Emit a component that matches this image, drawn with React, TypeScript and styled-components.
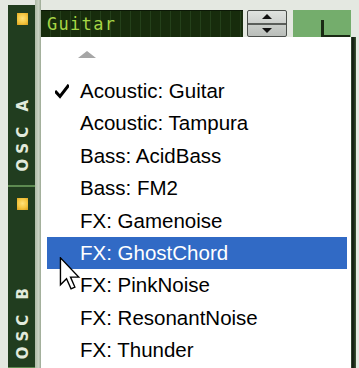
import React from "react";
import styled, { createGlobalStyle } from "styled-components";

const Global = createGlobalStyle`
  html, body { margin: 0; padding: 0; }
  body {
    background: #e4e8e1;
    overflow: hidden;
    font-family: "Liberation Sans", Arial, sans-serif;
  }
`;

const Page = styled.div`
  position: relative;
  display: flex;
  width: 359px;
  height: 368px;
  padding-left: 8px;
  box-sizing: border-box;
  overflow: hidden;
`;

const SidePanel = styled.div`
  width: 27px;
  margin-top: 5px;
  background: #213d1f;
  display: flex;
  flex-direction: column;
  flex-shrink: 0;
`;

const Section = styled.div<{ $ledTop: number }>`
  height: 182px;
  flex-shrink: 0;
  display: flex;
  flex-direction: column;
  align-items: center;
  padding-top: ${(p) => p.$ledTop}px;
  box-sizing: border-box;
  border-bottom: 2px solid #5d8a50;
`;

const Led = styled.div`
  width: 11px;
  height: 12px;
  margin-left: 2px;
  background: radial-gradient(circle at 50% 45%, #ffe27a 0%, #f4c640 55%, #d99c1c 100%);
`;

const VLabel = styled.div<{ $gap: number }>`
  margin-top: ${(p) => p.$gap}px;
  margin-left: 3px;
  writing-mode: vertical-rl;
  transform: rotate(180deg);
  font-family: "DejaVu Sans", Verdana, sans-serif;
  font-weight: bold;
  font-size: 15px;
  letter-spacing: 5px;
  line-height: 15px;
  color: #e2eadc;
`;

const Stripe = styled.div`
  width: 6px;
  flex-shrink: 0;
  background: linear-gradient(90deg, #aebba6 0%, #c9d2c2 60%, #9aa893 100%);
`;

const Main = styled.div`
  flex: 1;
  display: flex;
  flex-direction: column;
  min-width: 0;
`;

const TopBar = styled.div`
  display: flex;
  align-items: stretch;
  height: 27px;
  margin-top: 10px;
  flex-shrink: 0;
`;

const Display = styled.div`
  width: 202px;
  box-sizing: border-box;
  background-color: #172c0c;
  background-image: repeating-linear-gradient(
    90deg,
    transparent 0px,
    transparent 9px,
    #24401a 9px,
    #24401a 10px
  );
  border-top: 1px solid #0c1806;
  display: flex;
  align-items: center;
  padding-left: 6px;
  font-family: "DejaVu Sans Mono", "Liberation Mono", monospace;
  font-size: 17px;
  letter-spacing: 1.3px;
  color: #a6d646;
`;

const Spinner = styled.div`
  width: 40px;
  margin-left: 4px;
  box-sizing: border-box;
  border: 1px solid #4a4e4a;
  border-radius: 2px;
  background: linear-gradient(180deg, #e0e3e0 0%, #b9bdb9 100%);
  display: flex;
  flex-direction: column;
`;

const SpinHalf = styled.div<{ $top?: boolean }>`
  flex: 1;
  display: flex;
  align-items: center;
  justify-content: center;
  border-bottom: ${(p) => (p.$top ? "2px solid #5a5e5a" : "none")};
`;

const Tri = styled.div<{ $up?: boolean }>`
  width: 0;
  height: 0;
  border-left: 5px solid transparent;
  border-right: 5px solid transparent;
  ${(p) =>
    p.$up ? "border-bottom: 5px solid #111;" : "border-top: 5px solid #111;"}
`;

const GreenBox = styled.div`
  width: 58px;
  margin-left: 6px;
  background: #74ad6c;
  display: flex;
  align-items: flex-end;
`;

const GreenTick = styled.div`
  width: 29px;
  height: 17px;
  margin-left: 28px;
  border-left: 3px solid #1a2a14;
  border-bottom: 2px solid #1a2a14;
  box-sizing: border-box;
`;

const MenuRow = styled.div`
  flex: 1;
  display: flex;
  min-height: 0;
`;

const Menu = styled.div`
  width: 310px;
  background: #ffffff;
  padding: 0 4px 0 6px;
  box-sizing: border-box;
  flex-shrink: 0;
`;

const ScrollUp = styled.div`
  height: 38px;
  display: flex;
  align-items: center;
  padding-left: 31px;
  box-sizing: border-box;
  padding-bottom: 4px;
`;

const UpArrow = styled.div`
  width: 0;
  height: 0;
  border-left: 9.5px solid transparent;
  border-right: 9.5px solid transparent;
  border-bottom: 7px solid #a6a6a6;
`;

const Item = styled.div<{ $active?: boolean }>`
  height: 32.4px;
  display: grid;
  grid-template-columns: 33px 1fr;
  align-items: center;
  font-size: 20.5px;
  line-height: 32.4px;
  color: ${(p) => (p.$active ? "#ffffff" : "#000000")};
  background: ${(p) => (p.$active ? "#316ac5" : "transparent")};
  white-space: nowrap;
`;

const CheckCell = styled.div`
  display: flex;
  align-items: center;
  padding-left: 8px;
`;

const Edge = styled.div`
  width: 5px;
  flex-shrink: 0;
  background: linear-gradient(90deg, #4d6a48 0px, #121a10 1px, #1b2818 3px, #3e5a38 5px);
`;

const Cursor = styled.svg`
  position: absolute;
  left: 59px;
  top: 257px;
`;

const items = [
  "Acoustic: Guitar",
  "Acoustic: Tampura",
  "Bass: AcidBass",
  "Bass: FM2",
  "FX: Gamenoise",
  "FX: GhostChord",
  "FX: PinkNoise",
  "FX: ResonantNoise",
  "FX: Thunder",
];

const Check = () => (
  <svg width="14" height="15" viewBox="0 0 14 15">
    <path d="M1 8 L5 12.5 L13 2" fill="none" stroke="#000" strokeWidth="3" strokeLinecap="square" />
  </svg>
);

export default function App() {
  return (
    <>
      <Global />
      <Page>
        <SidePanel>
          <Section $ledTop={8}>
            <Led />
            <VLabel $gap={70}>OSC A</VLabel>
          </Section>
          <Section $ledTop={11}>
            <Led />
            <VLabel $gap={73}>OSC B</VLabel>
          </Section>
        </SidePanel>
        <Stripe />
        <Main>
          <TopBar>
            <Display>Guitar</Display>
            <Spinner>
              <SpinHalf $top>
                <Tri $up />
              </SpinHalf>
              <SpinHalf>
                <Tri />
              </SpinHalf>
            </Spinner>
            <GreenBox>
              <GreenTick />
            </GreenBox>
          </TopBar>
          <MenuRow>
            <Menu>
              <ScrollUp>
                <UpArrow />
              </ScrollUp>
              {items.map((t, i) => (
                <Item key={t} $active={i === 5}>
                  <CheckCell>{i === 0 ? <Check /> : null}</CheckCell>
                  <span>{t}</span>
                </Item>
              ))}
            </Menu>
            <Edge />
          </MenuRow>
        </Main>
        <Cursor width="22" height="33" viewBox="0 0 12 19">
          <path
            d="M0.5 0.5 L0.5 16 L4 12.5 L6.6 18.3 L8.8 17.3 L6.3 11.6 L11 11.6 Z"
            fill="#ffffff"
            stroke="#000000"
            strokeWidth="0.8"
            strokeLinejoin="miter"
          />
        </Cursor>
      </Page>
    </>
  );
}
